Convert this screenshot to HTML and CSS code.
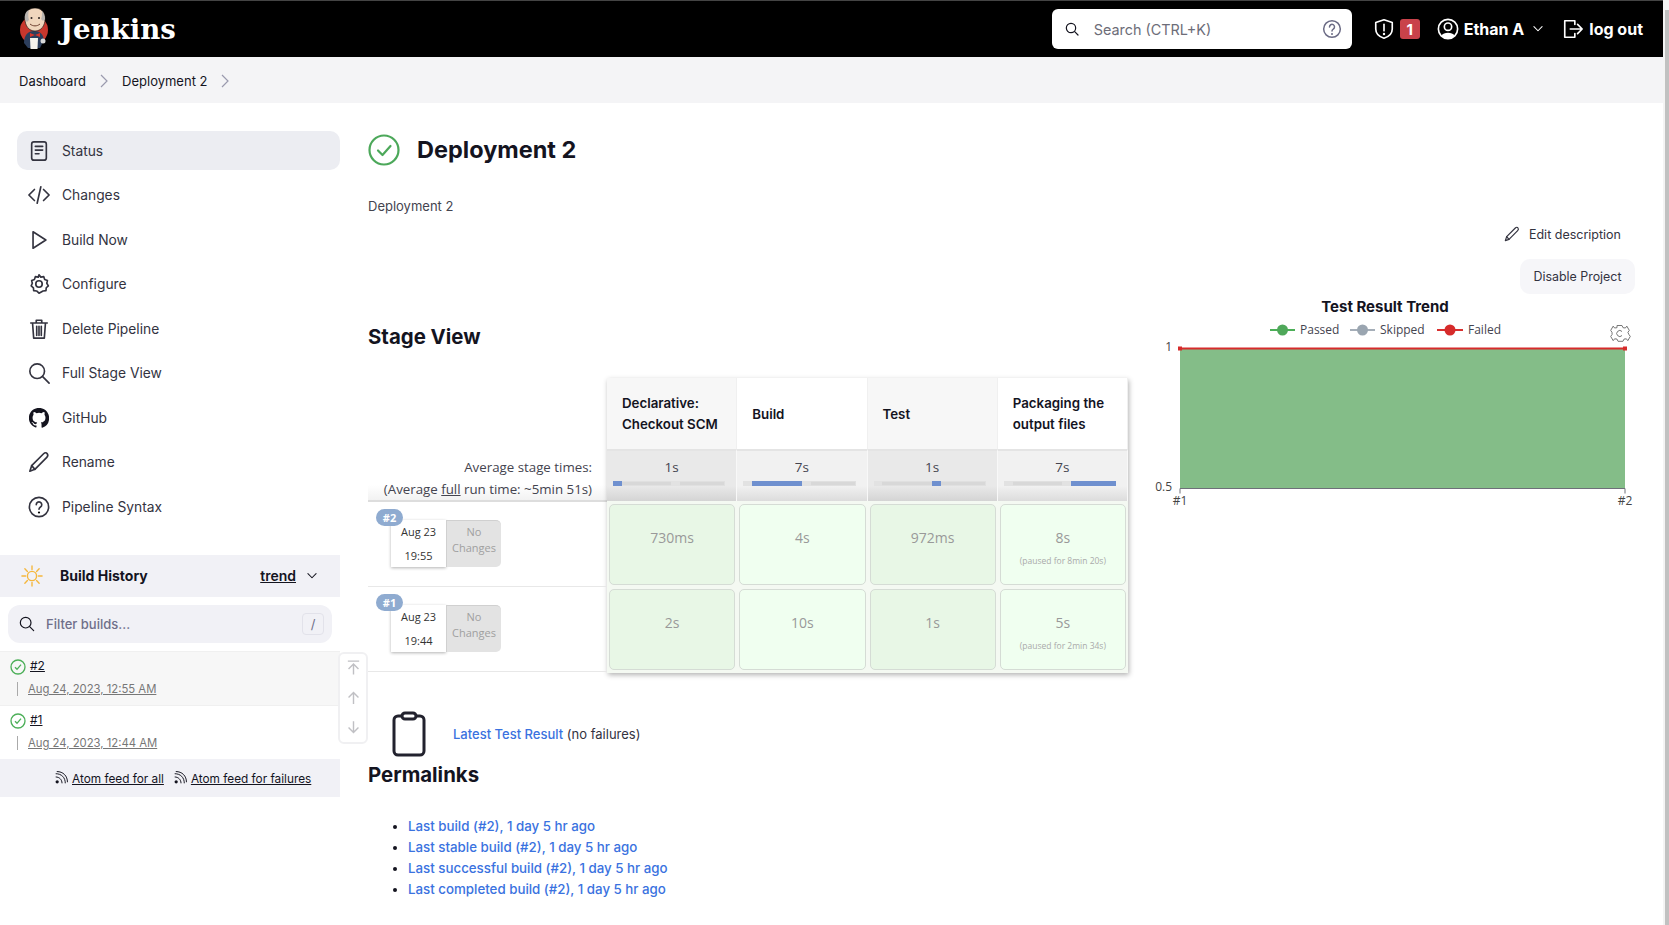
FILE: index.html
```html
<!DOCTYPE html>
<html lang="en">

<head>
    <meta charset="UTF-8">
    <meta name="viewport" content="width=device-width, initial-scale=1.0">
    <title>Deployment 2 - Jenkins</title>
    <link rel="stylesheet" href="styles.css">
</head>

<body>
    <header class="top-bar">
        <a class="brand" href="#">
            <svg class="brand-logo" viewBox="0 0 30 42">
                <circle cx="15" cy="22" r="14" fill="#c8372d"/>
                <path d="M5 35c0-8 4-12 10-12s9 3 10 9l-4 8H9z" fill="#2c3e5c"/>
                <path d="M6 11C6 4 10 0 16 0s10 4 10 11c0 7-4 12-10 12S6 18 6 11z" fill="#f0d6bd" stroke="#2a2220" stroke-width=".7"/>
                <path d="M6 12C5 7 7 3 10 2c-1 3-1 7 0 10l-2 2zM26 11c0-3-1-6-3-8 0 3 0 6-1 8l2 2z" fill="#b9b4b0"/>
                <circle cx="12.500" cy="10" r="1" fill="#2a2220"/>
                <circle cx="20" cy="10" r="1" fill="#2a2220"/>
                <path d="M11 16c3 2.500 7 2.500 10 0" fill="none" stroke="#6d3f30" stroke-width="1"/>
                <path d="M11 25l5 2 5-2v4l-5-2-5 2z" fill="#d5342b"/>
                <path d="M11 30h8l-.5 11h-7z" fill="#f4f2ec"/>
                <circle cx="24" cy="33" r="2.500" fill="#d8d8d8"/>
            </svg>
            <span class="brand-name">Jenkins</span>
        </a>
        <div class="top-search">
            <svg class="ic-16" viewBox="0 0 24 24"><circle cx="10.500" cy="10.500" r="7" class="ln"/><path d="M16 16l5 5" class="ln"/></svg>
            <span class="top-search-text">Search (CTRL+K)</span>
            <svg class="top-help" viewBox="0 0 24 24"><circle cx="12" cy="12" r="10" class="ln"/><path d="M9 9.500a3 3 0 1 1 4.600 2.500c-1 .7-1.600 1.200-1.600 2.500" class="ln"/><circle cx="12" cy="18" r="1.200"/></svg>
        </div>
        <div class="top-actions">
            <svg class="ic-22 on-dark" viewBox="0 0 24 24"><path d="M12 2l9 3v7c0 5-4 8.500-9 10-5-1.500-9-5-9-10V5z" class="ln"/><path d="M12 7v7" class="ln"/><circle cx="12" cy="17.500" r="1.300" fill="#fff"/></svg>
            <span class="alert-count">1</span>
            <svg class="ic-22 on-dark user-icon" viewBox="0 0 24 24"><circle cx="12" cy="12" r="10.500" class="ln"/><circle cx="12" cy="9.500" r="4" class="ln"/><path d="M5 19c2-4 12-4 14 0l-3 3H8z" fill="#fff"/></svg>
            <span class="top-link">Ethan A</span>
            <svg class="top-caret" viewBox="0 0 24 24"><path d="M5 8l7 7 7-7" class="ln"/></svg>
            <svg class="ic-22 on-dark logout-icon" viewBox="0 0 24 24"><path d="M14 7V3H3v18h11v-4" class="ln"/><path d="M9 12h13M17 7l5 5-5 5" class="ln"/></svg>
            <span class="top-link">log out</span>
        </div>
    </header>

    <nav class="crumbs">
        <a href="#">Dashboard</a>
        <svg class="crumb-sep" viewBox="0 0 12 14"><path d="M3 1l6 6-6 6"/></svg>
        <a href="#">Deployment 2</a>
        <svg class="crumb-sep" viewBox="0 0 12 14"><path d="M3 1l6 6-6 6"/></svg>
    </nav>

    <div class="page">
        <aside class="side">
            <ul class="tasks">
                <li class="task task-active">
                    <svg class="ic-22" viewBox="0 0 24 24"><rect x="4" y="2" width="16" height="20" rx="2.500" class="ln"/><path d="M8 7h8M8 11h8M8 15h4" class="ln"/></svg>
                    <span>Status</span>
                </li>
                <li class="task">
                    <svg class="ic-22" viewBox="0 0 24 24"><path d="M7 6l-6 6 6 6M17 6l6 6-6 6M14 3l-4 18" class="ln"/></svg>
                    <span>Changes</span>
                </li>
                <li class="task">
                    <svg class="ic-22" viewBox="0 0 24 24"><path d="M5.500 3l14 9-14 9z" class="ln"/></svg>
                    <span>Build Now</span>
                </li>
                <li class="task">
                    <svg class="ic-22" viewBox="0 0 24 24"><path d="M12 2l2 2.500 3.200-.500 1 3 3 1.200-.700 3 1.700 2.800-2.300 2.100-.300 3.200-3.200.300L12 22l-2.600-2.400-3.200-.300-.300-3.200L3.500 14l1.200-2.800-.700-3 3-1.200 1-3 3.200.500z" class="ln"/><circle cx="12" cy="12" r="3.500" class="ln"/></svg>
                    <span>Configure</span>
                </li>
                <li class="task">
                    <svg class="ic-22" viewBox="0 0 24 24"><path d="M3 5.500h18M9 5V2.500h6V5M5 6l1.200 16h11.600L19 6M9.500 9v10M12 9v10M14.500 9v10" class="ln"/></svg>
                    <span>Delete Pipeline</span>
                </li>
                <li class="task">
                    <svg class="ic-22" viewBox="0 0 24 24"><circle cx="10" cy="10" r="8" class="ln"/><path d="M16 16l7 7" class="ln"/></svg>
                    <span>Full Stage View</span>
                </li>
                <li class="task">
                    <svg class="ic-22 gh-icon" viewBox="0 0 16 16"><path d="M8 0C3.580 0 0 3.580 0 8c0 3.540 2.290 6.530 5.470 7.590.4.070.55-.17.55-.38v-1.340c-2.230.48-2.690-1.070-2.690-1.070-.36-.92-.89-1.170-.89-1.170-.73-.5.05-.49.05-.49.800.06 1.230.83 1.230.83.720 1.220 1.870.870 2.330.660.070-.520.280-.870.510-1.070-1.780-.2-3.640-.890-3.640-3.950 0-.870.310-1.590.820-2.150-.080-.2-.360-1.020.080-2.120 0 0 .670-.210 2.200.820a7.600 7.600 0 0 1 4 0c1.530-1.040 2.200-.820 2.200-.820.440 1.100.160 1.920.080 2.120.510.560.820 1.270.820 2.150 0 3.070-1.870 3.750-3.650 3.950.290.250.540.730.540 1.480v2.200c0 .210.150.460.550.380A8 8 0 0 0 16 8c0-4.420-3.580-8-8-8z" fill="#14141f"/></svg>
                    <span>GitHub</span>
                </li>
                <li class="task">
                    <svg class="ic-22" viewBox="0 0 24 24"><path d="M2 22l2-6L17 3c1.500-1.500 3-1.500 4 0s1 2.500-.500 4L7.500 20z" class="ln"/><path d="M4 16l3.500 4" class="ln"/></svg>
                    <span>Rename</span>
                </li>
                <li class="task">
                    <svg class="ic-22" viewBox="0 0 24 24"><circle cx="12" cy="12" r="10.500" class="ln"/><path d="M9 9.500a3 3 0 1 1 4.600 2.500c-1 .7-1.600 1.200-1.600 2.500" class="ln"/><circle cx="12" cy="18" r="1.200"/></svg>
                    <span>Pipeline Syntax</span>
                </li>
            </ul>

            <div class="history">
                <div class="history-head">
                    <svg class="sun" viewBox="0 0 24 24"><circle cx="12" cy="12" r="5"/><path d="M12 1v4M12 19v4M1 12h4M19 12h4M4.200 4.200l2.800 2.800M17 17l2.800 2.800M4.200 19.800L7 17M17 7l2.800-2.800"/></svg>
                    <b>Build History</b>
                    <a class="history-trend" href="#">trend</a>
                    <svg class="history-caret" viewBox="0 0 24 24"><path d="M5 8l7 7 7-7" class="ln"/></svg>
                </div>
                <div class="filter">
                    <svg class="ic-16" viewBox="0 0 24 24"><circle cx="10" cy="10" r="8" class="ln"/><path d="M16 16l6 6" class="ln"/></svg>
                    <span class="filter-text">Filter builds...</span>
                    <span class="filter-key">/</span>
                </div>
                <div class="builds">
                    <div class="build build-hover">
                        <div class="build-top">
                            <svg class="ok-small" viewBox="0 0 24 24"><circle cx="12" cy="12" r="10.500"/><path d="M7.500 12.500l3 3 6-7"/></svg>
                            <a href="#">#2</a>
                        </div>
                        <div class="build-date"><a href="#">Aug 24, 2023, 12:55 AM</a></div>
                    </div>
                    <div class="build">
                        <div class="build-top">
                            <svg class="ok-small" viewBox="0 0 24 24"><circle cx="12" cy="12" r="10.500"/><path d="M7.500 12.500l3 3 6-7"/></svg>
                            <a href="#">#1</a>
                        </div>
                        <div class="build-date"><a href="#">Aug 24, 2023, 12:44 AM</a></div>
                    </div>
                    <div class="pager">
                        <svg viewBox="0 0 24 24"><path d="M4 3h16M12 22V8M5 14l7-7 7 7"/></svg>
                        <svg viewBox="0 0 24 24"><path d="M12 21V5M5 12l7-7 7 7"/></svg>
                        <svg viewBox="0 0 24 24"><path d="M12 3v16M5 12l7 7 7-7"/></svg>
                    </div>
                </div>
                <div class="feeds">
                    <svg class="rss" viewBox="0 0 24 24"><circle cx="4" cy="20" r="3" fill="#14141f"/><path d="M2 11c6 0 11 5 11 11M2 5c10 0 17 7 17 17M4 1c11 0 19 8 19 19" class="ln"/></svg>
                    <a href="#">Atom feed for all</a>
                    <svg class="rss rss-next" viewBox="0 0 24 24"><circle cx="4" cy="20" r="3" fill="#14141f"/><path d="M2 11c6 0 11 5 11 11M2 5c10 0 17 7 17 17M4 1c11 0 19 8 19 19" class="ln"/></svg>
                    <a href="#">Atom feed for failures</a>
                </div>
            </div>
        </aside>

        <main class="main">
            <div class="title-row">
                <svg class="title-icon" viewBox="0 0 32 32"><circle cx="16" cy="16" r="14.500"/><path d="M10 16.500l4.500 4.500 8-9"/></svg>
                <h1>Deployment 2</h1>
            </div>
            <p class="desc">Deployment 2</p>
            <div class="project-actions">
                <a class="edit-desc" href="#">
                    <svg class="ic-16" viewBox="0 0 24 24"><path d="M2 22l2-6L17 3c1.500-1.500 3-1.500 4 0s1 2.500-.500 4L7.500 20z" class="ln"/><path d="M4 16l3.500 4" class="ln"/></svg>
                    Edit description
                </a>
                <button class="disable-btn">Disable Project</button>
            </div>

            <div class="columns">
                <section class="stage-col">
                    <h2 class="stage-title">Stage View</h2>

                    <div class="stage">
                        <div class="stage-left">
                            <div class="avg-label">
                                <div>Average stage times:</div>
                                <div>(Average <u>full</u> run time: ~5min 51s)</div>
                            </div>
                            <div class="run">
                                <span class="run-badge">#2</span>
                                <div class="run-card">
                                    <div class="run-date"><span>Aug 23</span><span>19:55</span></div>
                                    <div class="run-changes">No<br>Changes</div>
                                </div>
                            </div>
                            <div class="run">
                                <span class="run-badge">#1</span>
                                <div class="run-card">
                                    <div class="run-date"><span>Aug 23</span><span>19:44</span></div>
                                    <div class="run-changes">No<br>Changes</div>
                                </div>
                            </div>
                        </div>

                        <div class="stage-grid">
                            <div class="head head-odd">Declarative: Checkout SCM</div>
                            <div class="head">Build</div>
                            <div class="head head-odd">Test</div>
                            <div class="head">Packaging the output files</div>

                            <div class="avg avg-odd">1s
                                <div class="avg-bar"><i class="mark" style="left: 52%; width: 8%"></i><i class="seg" style="left: 0%; width: 8%"></i></div>
                            </div>
                            <div class="avg">7s
                                <div class="avg-bar"><i class="mark" style="left: 0%; width: 8%"></i><i class="mark" style="left: 52%; width: 8%"></i><i class="seg" style="left: 8%; width: 44%"></i></div>
                            </div>
                            <div class="avg avg-odd">1s
                                <div class="avg-bar"><i class="mark" style="left: 0%; width: 8%"></i><i class="seg" style="left: 52%; width: 8%"></i></div>
                            </div>
                            <div class="avg">7s
                                <div class="avg-bar"><i class="mark" style="left: 0%; width: 8%"></i><i class="mark" style="left: 52%; width: 8%"></i><i class="seg" style="left: 60%; width: 40%"></i></div>
                            </div>

                            <div class="cell-wrap"><div class="cell cell-odd">730ms</div></div>
                            <div class="cell-wrap"><div class="cell">4s</div></div>
                            <div class="cell-wrap"><div class="cell cell-odd">972ms</div></div>
                            <div class="cell-wrap"><div class="cell">8s<small>(paused for 8min 20s)</small></div></div>

                            <div class="cell-wrap"><div class="cell cell-odd">2s</div></div>
                            <div class="cell-wrap"><div class="cell">10s</div></div>
                            <div class="cell-wrap"><div class="cell cell-odd">1s</div></div>
                            <div class="cell-wrap"><div class="cell">5s<small>(paused for 2min 34s)</small></div></div>
                        </div>
                    </div>

                    <div class="latest">
                        <svg class="clip" viewBox="0 0 34 46"><rect x="2" y="5" width="30" height="39" rx="4"/><rect x="10" y="2" width="14" height="6" rx="3" fill="#fff"/></svg>
                        <span><a href="#">Latest Test Result</a> (no failures)</span>
                    </div>

                    <h2 class="perma-title">Permalinks</h2>
                    <ul class="perma">
                        <li><a href="#">Last build (#2), 1 day 5 hr ago</a></li>
                        <li><a href="#">Last stable build (#2), 1 day 5 hr ago</a></li>
                        <li><a href="#">Last successful build (#2), 1 day 5 hr ago</a></li>
                        <li><a href="#">Last completed build (#2), 1 day 5 hr ago</a></li>
                    </ul>
                </section>

                <section class="trend-col">
                    <svg class="trend" viewBox="0 0 520 220" width="520" height="220">
                        <text class="trend-title" x="245" y="16" text-anchor="middle">Test Result Trend</text>

                        <path d="M130 34h25" stroke="#4caf58" stroke-width="2"/><circle cx="142.500" cy="34" r="5.500" fill="#4fa85a"/>
                        <text class="trend-legend" x="160" y="37.500">Passed</text>
                        <path d="M210 34h25" stroke="#a5aeb8" stroke-width="2"/><circle cx="222.500" cy="34" r="5.500" fill="#9aa5b0"/>
                        <text class="trend-legend" x="240" y="37.500">Skipped</text>
                        <path d="M297 34h26" stroke="#d9302f" stroke-width="2"/><circle cx="310" cy="34" r="5.500" fill="#d62b2b"/>
                        <text class="trend-legend" x="328" y="37.500">Failed</text>

                        <g fill="none" stroke="#777" stroke-width="1" stroke-linejoin="round">
                            <path d="M477 29.500h5l1 2.200 2.400.300 1.400-1.900 2.500 4.300-1.400 1.900 1 2.200 1.400 1.900-2.500 4.300-1.400-1.900-2.400.300-1 2.200h-5l-1-2.200-2.400-.300-1.400 1.900-2.500-4.300 1.400-1.900-.1-2.200-1.300-1.900 2.500-4.300 1.400 1.900 2.400-.300z"/>
                            <path d="M482 35.500a3 3 0 1 0 0 4"/>
                        </g>

                        <rect x="40" y="52.500" width="445" height="140" fill="#84bd88"/>
                        <path d="M40 52.500h445" stroke="#d62b2b" stroke-width="2"/>
                        <rect x="38" y="50.500" width="4" height="4" fill="#d62b2b"/>
                        <rect x="483" y="50.500" width="4" height="4" fill="#d62b2b"/>
                        <path d="M40 192.500h445M40 192.500v5M485 192.500v5" stroke="#6e7079" stroke-width="1" fill="none"/>

                        <text class="trend-axis" x="32" y="55" text-anchor="end">1</text>
                        <text class="trend-axis" x="32" y="195" text-anchor="end">0.5</text>
                        <text class="trend-axis" x="40" y="208.500" text-anchor="middle">#1</text>
                        <text class="trend-axis" x="485" y="208.500" text-anchor="middle">#2</text>
                    </svg>
                </section>
            </div>
        </main>
    </div>

    <div class="scrollbar"></div>
</body>

</html>
```

FILE: styles.css
```css
* {
    box-sizing: border-box;
}

html,
body {
    margin: 0;
    padding: 0;
    height: 925px;
    overflow: hidden;
}

body {
    background: #fff;
    color: #14141f;
    font-family: Inter, "Noto Sans", sans-serif;
    font-size: 14px;
    padding-right: 6px;
}

a {
    color: inherit;
}

.ln {
    fill: none;
    stroke: currentColor;
    stroke-width: 1.8;
    stroke-linecap: round;
    stroke-linejoin: round;
}

.ic-16 {
    width: 16px;
    height: 16px;
    flex: none;
}

.ic-22 {
    width: 22px;
    height: 22px;
    flex: none;
}

.scrollbar {
    position: fixed;
    top: 0;
    right: 0;
    bottom: 0;
    width: 6px;
    background: #f4f4f4;
}

.scrollbar::after {
    content: "";
    position: absolute;
    top: 10px;
    left: 2px;
    right: 0;
    bottom: 0;
    background: #c1c1c1;
}

/* Top bar */

.top-bar {
    height: 57px;
    background: #000;
    border-top: 1px solid #444;
    display: flex;
    align-items: center;
    padding: 0 20px 0 19px;
    color: #fff;
}

.brand {
    display: flex;
    align-items: center;
    gap: 11px;
    text-decoration: none;
}

.brand-logo {
    width: 30px;
    height: 42px;
}

.brand-name {
    font-family: "DejaVu Serif", serif;
    font-weight: 700;
    font-size: 27.600px;
}

.top-search {
    margin-left: auto;
    width: 300px;
    height: 40px;
    background: #fff;
    border-radius: 6px;
    display: flex;
    align-items: center;
    padding: 0 10px 0 12px;
    color: #14141f;
}

.top-search-text {
    margin-left: 14px;
    font-size: 14.400px;
    color: #6d6d78;
}

.top-help {
    margin-left: auto;
    width: 20px;
    height: 20px;
    color: #6b6b85;
    fill: #6b6b85;
}

.top-actions {
    display: flex;
    align-items: center;
    margin-left: 21px;
}

.alert-count {
    margin-left: 5px;
    width: 20px;
    height: 20px;
    background: #c9424a;
    border-radius: 3px;
    font-weight: 700;
    font-size: 15px;
    display: flex;
    align-items: center;
    justify-content: center;
}

.user-icon {
    margin: 0 5px 0 17px;
}

.top-link {
    font-weight: 700;
    font-size: 16px;
}

.top-caret {
    width: 14px;
    height: 14px;
    margin: 0 17px 0 7px;
}

.logout-icon {
    margin-right: 5px;
}

/* Breadcrumbs */

.crumbs {
    height: 46px;
    background: #f4f4f6;
    display: flex;
    align-items: center;
    padding: 1px 0 0 19px;
    font-size: 13px;
}

.crumbs a {
    text-decoration: none;
}

.crumb-sep {
    width: 12px;
    height: 14px;
    margin: 0 12px;
    fill: none;
    stroke: #9a9aae;
    stroke-width: 1.2;
}

/* Layout */

.page {
    display: flex;
    align-items: flex-start;
}

.side {
    width: 340px;
    flex: none;
    padding-top: 28px;
}

.main {
    flex: 1;
    min-width: 0;
    padding: 28px 28px 0 28px;
}

/* Side tasks */

.tasks {
    list-style: none;
    margin: 0 0 29px 17px;
    padding: 0;
}

.task {
    height: 39px;
    margin-bottom: 5.500px;
    border-radius: 10px;
    display: flex;
    align-items: center;
    gap: 12px;
    padding-left: 11px;
    font-size: 13.800px;
    color: #33333f;
}

.task-active {
    background: #ecedf2;
}

.gh-icon {
    transform: scale(0.92);
}

/* Build history */

.history-head {
    height: 42px;
    background: #f1f1f6;
    display: flex;
    align-items: center;
    padding: 0 0 1px 21px;
}

.sun {
    width: 22px;
    height: 22px;
    margin-right: 17px;
    fill: none;
    stroke: #f5b73d;
    stroke-width: 1.500;
    stroke-linecap: round;
}

.history-trend {
    margin-left: auto;
    font-weight: 600;
}

.history-caret {
    width: 14px;
    height: 14px;
    margin: 0 21px 0 9px;
}

.filter {
    height: 38px;
    margin: 8px;
    background: #f1f1f6;
    border-radius: 12px;
    display: flex;
    align-items: center;
    padding: 0 8px 0 11px;
    color: #14141f;
}

.filter-text {
    margin-left: 11px;
    font-size: 13px;
    font-weight: 500;
    color: #6f6f8a;
}

.filter-key {
    margin-left: auto;
    width: 22px;
    height: 22px;
    border: 1px solid #e2e2ea;
    border-radius: 4px;
    display: flex;
    align-items: center;
    justify-content: center;
    color: #6f6f8a;
    font-size: 13px;
}

.builds {
    position: relative;
}

.build {
    height: 54px;
    padding: 3px 0 0 10px;
    border-top: 1px solid #f0f0f0;
}

.build-hover {
    background: #f7f7f7;
}

.build-top {
    display: flex;
    align-items: center;
    gap: 4px;
    font-size: 12px;
    height: 20px;
}

.ok-small {
    width: 16px;
    height: 16px;
    margin-top: 3px;
    fill: none;
    stroke: #4caf58;
    stroke-width: 2;
}

.build-date {
    margin: 7px 0 0 7px;
    padding-left: 10px;
    font-size: 11.300px;
    line-height: 14px;
    color: #777;
    border-left: 1px solid #aaa;
}

.pager {
    position: absolute;
    left: 338px;
    top: 1px;
    width: 30px;
    height: 92px;
    border: 2px solid #f0f0f2;
    border-radius: 6px;
    background: #fff;
    display: flex;
    flex-direction: column;
    align-items: center;
    gap: 13px;
    padding-top: 5px;
}

.pager svg {
    width: 17px;
    height: 17px;
    fill: none;
    stroke: #c0c0c4;
    stroke-width: 2;
}

.feeds {
    height: 38px;
    background: #f1f1f6;
    display: flex;
    align-items: center;
    padding: 2px 0 0 55px;
    font-size: 11.800px;
}

.rss {
    width: 13px;
    height: 13px;
    margin: -4px 4px 0 0;
}

.rss-next {
    margin-left: 10px;
}

/* Project header */

.title-row {
    display: flex;
    align-items: center;
    gap: 17px;
}

.title-icon {
    width: 32px;
    height: 32px;
    fill: none;
    stroke: #4ca85a;
    stroke-width: 2.200;
    stroke-linecap: round;
    stroke-linejoin: round;
}

h1 {
    margin: 1px 0 0;
    font-size: 23.500px;
    font-weight: 700;
    line-height: 36px;
}

.desc {
    margin: 29px 0 0;
    font-size: 13px;
    color: #44444f;
    line-height: 18px;
}

.project-actions {
    display: flex;
    flex-direction: column;
    align-items: flex-end;
    margin-top: 1px;
}

.edit-desc {
    display: flex;
    align-items: center;
    gap: 9px;
    height: 36px;
    padding-right: 14px;
    text-decoration: none;
    font-size: 12.500px;
    color: #33333f;
}

.disable-btn {
    margin-top: 7px;
    width: 115px;
    height: 35px;
    border: 0;
    border-radius: 10px;
    background: #f6f6f9;
    color: #33333f;
    font: 12.400px Inter, sans-serif;
}

/* Columns under the header */

.columns {
    display: flex;
    align-items: flex-start;
}

.stage-col {
    width: 772px;
    flex: none;
}

h2 {
    margin: 0;
    font-size: 20.400px;
    font-weight: 700;
    line-height: 30px;
}

.stage-title {
    margin-top: 28px;
}

/* Stage view table */

.stage {
    display: flex;
    margin-top: 26px;
    font-family: "Open Sans", sans-serif;
}

.stage-left {
    width: 239px;
    padding-top: 72px;
}

.avg-label {
    height: 52px;
    border-bottom: 2px solid #ddd;
    background: linear-gradient(#fff 70%, #f2f2f2);
    text-align: right;
    padding: 6px 15px 0 0;
    line-height: 22px;
    font-size: 13.300px;
    color: #44444f;
}

.run {
    position: relative;
    height: 85px;
    border-bottom: 1px solid #e8e8e8;
    padding: 18px 0 0 23px;
}

.run-badge {
    position: absolute;
    left: 8px;
    top: 7px;
    width: 27px;
    height: 17px;
    border-radius: 9px;
    background: #8fabd0;
    color: #fff;
    font-size: 11px;
    font-weight: 700;
    text-align: center;
    line-height: 17px;
    z-index: 1;
}

.run-card {
    display: flex;
    width: 110px;
    height: 47px;
    font-size: 11px;
}

.run-date {
    width: 55px;
    display: flex;
    flex-direction: column;
    align-items: center;
    justify-content: space-around;
    background: #fff;
    box-shadow: 0 1px 3px rgba(0, 0, 0, 0.3);
    color: #333;
}

.run-changes {
    width: 55px;
    background: #e3e3e3;
    border-radius: 0 5px 5px 0;
    border-top: 1px solid #d0d0d0;
    border-left: 1px solid #d0d0d0;
    color: #a0a0a0;
    text-align: center;
    line-height: 16px;
    padding-top: 3px;
}

.stage-grid {
    width: 521px;
    display: grid;
    grid-template-columns: repeat(4, 1fr);
    grid-template-rows: 71px 52px 85px 87px;
    box-shadow: 1px 2px 5px rgba(0, 0, 0, 0.3);
    background: #f4f9f2;
}

.head {
    display: flex;
    align-items: center;
    padding: 1px 15px 0;
    background: #fff;
    font-family: Inter, sans-serif;
    font-size: 13.300px;
    font-weight: 600;
    line-height: 21px;
    border-right: 1px solid #f0f0f0;
}

.head-odd {
    background: #f7f7f7;
}

.avg {
    text-align: center;
    padding-top: 6px;
    font-size: 13.500px;
    line-height: 20px;
    color: #44444f;
    background: linear-gradient(#f1f1f1 70%, #dcdcdc);
    border-top: 2px solid #e4e4e4;
    border-right: 1px solid #f8f8f8;
}

.avg-odd {
    background: linear-gradient(#e9e9e9 70%, #d4d4d4);
}

.avg-bar {
    position: relative;
    height: 5px;
    margin: 4px 11px 0 6px;
    background: #d8d8d8;
    box-shadow: inset 0 0 0 1px #e0e0e0;
}

.seg,
.mark {
    position: absolute;
    top: 0;
    height: 5px;
}

.seg {
    background: #6f90cf;
}

.mark {
    background: #e2e2e2;
}

.cell-wrap {
    padding: 3px 2px 0 2px;
}

.cell {
    height: 81px;
    border: 1px solid #d5dcd5;
    border-radius: 5px;
    background: #f0fff0;
    color: #999;
    text-align: center;
    padding-top: 23px;
    line-height: 20px;
    font-size: 14px;
}

.cell-odd {
    background: #e8f7e6;
}

.cell small {
    display: block;
    margin-top: 7px;
    font-size: 8.500px;
    line-height: 12px;
    color: #aaa;
}

/* Below the table */

.latest {
    display: flex;
    align-items: center;
    gap: 27px;
    margin: 38px 0 0 24px;
    height: 46px;
    font-size: 13px;
    color: #33333f;
}

.clip {
    width: 34px;
    height: 46px;
    fill: none;
    stroke: #22222e;
    stroke-width: 3;
}

.latest a,
.perma a {
    color: #3a72e0;
    font-weight: 500;
    text-decoration: none;
}

.perma-title {
    margin-top: 3px;
}

.perma {
    margin: 26px 0 0;
    padding-left: 40px;
    font-size: 13.300px;
    line-height: 21px;
}

/* Trend chart */

.trend-col {
    margin: 2px 0 0 1px;
}

.trend {
    display: block;
    margin-left: -1px;
}

.trend-title {
    font-family: Inter, sans-serif;
    font-size: 15px;
    font-weight: 700;
    fill: #14141f;
}

.trend-legend {
    font-family: "Open Sans", sans-serif;
    font-size: 12px;
    fill: #44444f;
}

.trend-axis {
    font-family: "Open Sans", sans-serif;
    font-size: 12px;
    fill: #444;
}
```
